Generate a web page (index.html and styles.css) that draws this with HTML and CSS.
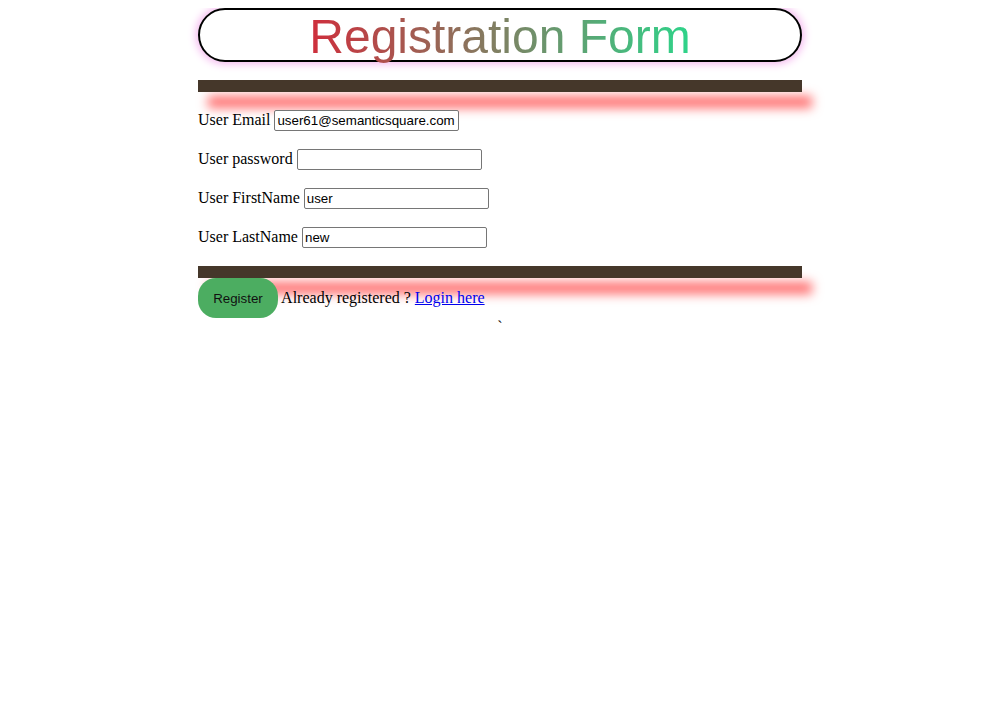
FILE: index.html
```html
<!DOCTYPE html>
<html>
<head>
<meta charset="utf-8">
<title>Registration Form</title>
<link rel="stylesheet" href="styles.css">
</head>
<body>
<div class="wrap">
  <h1 class="title"><span class="grad">Registration Form</span></h1>
  <hr class="bar">
  <form class="form">
    <p class="row"><label>User Email</label> <input class="field" type="text" value="user61@semanticsquare.com"></p>
    <p class="row"><label>User password</label> <input class="field" type="password" value=""></p>
    <p class="row"><label>User FirstName</label> <input class="field" type="text" value="user"></p>
    <p class="row"><label>User LastName</label> <input class="field" type="text" value="new"></p>
    <hr class="bar bar-bottom">
    <div class="actions"><button class="btn" type="button">Register</button> Already registered ? <a class="link" href="#">Login here</a></div>
  </form>
  <div class="tick">`</div>
</div>
</body>
</html>
```

FILE: styles.css
```css
html, body {
  background: #ffffff;
}
body {
  margin: 8px;
  font-family: "Liberation Serif", "Times New Roman", serif;
  font-size: 16px;
  color: #000;
}
.wrap {
  width: 604px;
  margin: 0 auto;
}
.title {
  margin: 0 0 18px 0;
  border: 2px solid #000;
  border-radius: 27px;
  box-shadow: 0 0 8px 2px #f4b4ee;
  text-align: center;
  font-family: "Liberation Sans", Arial, sans-serif;
  font-weight: normal;
  font-size: 48px;
  line-height: 50px;
  padding-top: 2px;
  height: 48px;
}
.grad {
  background: linear-gradient(to right, #cf2e3c, #2ed48a);
  -webkit-background-clip: text;
  background-clip: text;
  color: transparent;
}
.bar {
  display: block;
  height: 12px;
  margin: 0 0 16px 0;
  border: none;
  background: #45372a;
  box-shadow: 10px 16px 11px #ff6e6e;
}
.form {
  margin: 0;
}
.row {
  margin: 16px 0;
  line-height: 23px;
}
.field {
  box-sizing: border-box;
  width: 185px;
  height: 21px;
  font-family: "Liberation Sans", Arial, sans-serif;
  font-size: 13.333px;
  padding: 1px 2px;
  border: 1px solid #767676;
  border-radius: 2px;
  color: #000;
  background: #fff;
}
.bar-bottom {
  margin: 18px 0 0 0;
}
.actions {
  margin: 0;
}
.btn {
  width: 80px;
  height: 40px;
  border: none;
  border-radius: 18px;
  background: #4cad61;
  color: #111;
  font-family: "Liberation Sans", Arial, sans-serif;
  font-size: 13.333px;
  padding: 0;
}
.link {
  color: #0000ee;
}
.tick {
  text-align: center;
  line-height: 18px;
}
```
